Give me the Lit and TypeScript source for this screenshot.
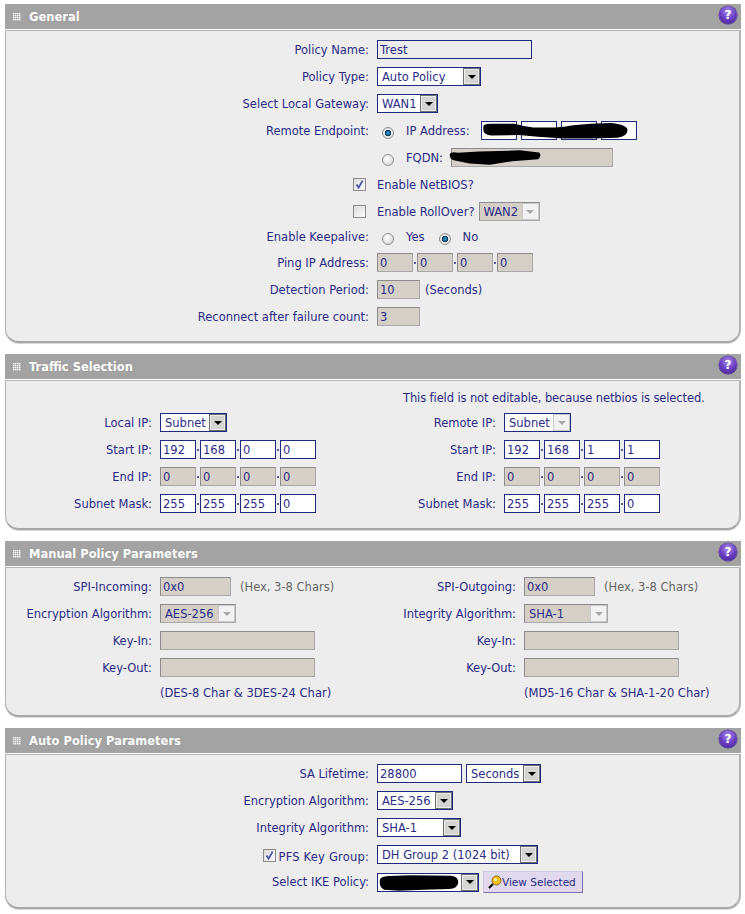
import { LitElement, html, css, svg } from "lit";
import { customElement } from "lit/decorators.js";

const field = (value: string, width: number, disabled = false, cls = "") =>
  html`<input class="field ${cls}" style="width:${width}px" .value=${value} value=${value} ?disabled=${disabled} />`;

const select = (value: string, width: number, mode: "" | "off" | "lock" = "", blob?: unknown) => html`
  <span class="sel ${mode}" style="width:${width}px">
    <select ?disabled=${mode !== ""}><option>${value}</option></select>
    <span class="arrow"><i></i></span>
    ${blob ?? ""}
  </span>`;

const octets = (vals: string[], disabled = false) => html`
  <span class="ip">
    ${vals.map((v, i) => html`${i ? html`<b class="dot"></b>` : ""}${field(v, 36, disabled)}`)}
  </span>`;

const radio = (on: boolean) => html`<span class="radio ${on ? "on" : ""}"></span>`;

const check = (on: boolean) => html`
  <span class="check">
    ${on
      ? html`<svg viewBox="0 0 11 11" width="11" height="11"><path d="M2.5 5.5 L4.6 8.6 L8.6 1.6" fill="none" stroke="#4a55a8" stroke-width="1.8"/></svg>`
      : ""}
  </span>`;

const grip = svg`<svg class="grip" viewBox="0 0 8 8" width="8" height="8">
  ${[0, 2, 4, 6].flatMap((y) => [0, 2, 4, 6].map((x) => svg`<rect x=${x} y=${y} width="1.4" height="1.4" fill="#fff"/>`))}
</svg>`;

const help = html`
  <span class="help"><span>?</span></span>`;

const blob = (d: string, cls: string) => svg`<svg class="blob ${cls}" viewBox="0 0 100 100" preserveAspectRatio="none"><path d=${d} fill="#000"/></svg>`;

const row = (label: unknown, control: unknown, cls = "") => html`
  <div class="row ${cls}"><div class="lab">${label}</div><div class="ctl">${control}</div></div>`;

@customElement("app-root")
export class AppRoot extends LitElement {
  static styles = css`
    :host {
      display: block;
      width: 745px;
      background: #fff;
      font: 11.5px "DejaVu Sans", Verdana, sans-serif;
      color: #2b2b86;
      padding: 4px 4px 5px 5px;
      box-sizing: border-box;
    }
    .panel { margin-bottom: 11px; width: 736px; }
    .panel:last-child { margin-bottom: 0; }
    .head {
      height: 25px;
      background: #a3a3a3;
      display: flex;
      align-items: center;
      color: #fff;
      font-weight: bold;
      font-size: 11.5px;
      padding: 0 4px 0 8px;
      text-shadow: 0 0 1px #8a8a8a;
    }
    .grip { margin-right: 8px; flex: none; }
    .title { flex: 1; }
    .help {
      width: 18px;
      height: 18px;
      margin-bottom: 3px;
      border-radius: 50%;
      background: radial-gradient(circle at 50% 30%, #a98ce8 0%, #6a3fc4 50%, #3d1c8c 100%);
      box-shadow: 0 0 0 0.5px #4a2a90;
      display: flex;
      align-items: center;
      justify-content: center;
      color: #fff;
      font: bold 12px "DejaVu Sans", sans-serif;
      text-shadow: none;
    }
    .body {
      margin-top: 1px;
      background: #ededed;
      border: 1px solid #b4b4b4;
      border-bottom: 2px solid #a8a8a8;
      border-right: 2px solid #b4b4b4;
      border-radius: 0 0 14px 14px;
      padding: 5px 0 11px;
      box-shadow: 0 1px 0 #d8d8d8;
    }
    .row { display: flex; align-items: center; height: 27px; }
    .row.short { height: 24px; }
    .row.tall { height: 28px; }
    .row.note { height: 23px; }
    .lab {
      flex: none;
      width: var(--lab);
      text-align: right;
      white-space: nowrap;
      display: flex;
      justify-content: flex-end;
      align-items: center;
    }
    .ctl {
      margin-left: 8px;
      display: flex;
      align-items: center;
      white-space: nowrap;
    }
    .wide { --lab: 363px; }
    .cols { display: grid; grid-template-columns: 366px 1fr; }
    .cols > div { --lab: 146px; }
    .cols > .traffic-r { --lab: 124px; }
    .cols > .manual-r { --lab: 144px; }
    .notice { padding-left: 31px; letter-spacing: -0.11px; }

    .field {
      box-sizing: border-box;
      height: 19px;
      border: 1px solid #1e2a80;
      background: #fff;
      color: #2b2b86;
      font: 11.5px "DejaVu Sans", Verdana, sans-serif;
      padding: 0 0 0 2px;
      margin: 0;
      outline: none;
      border-radius: 0;
    }
    .field.flat { background: #ededed; }
    .field:disabled {
      background: #d4d0c8;
      border-color: #8c8c8c #a8a8a8 #a8a8a8 #8c8c8c;
      color: #2b2b86;
      -webkit-text-fill-color: #2b2b86;
      opacity: 1;
    }
    .ip { display: inline-flex; align-items: center; position: relative; }
    .dot { width: 2px; height: 2px; margin: 0 1px; background: #5a5aa0; flex: none; }
    .sel { position: relative; display: inline-block; height: 19px; flex: none; }
    .sel select {
      appearance: none;
      -webkit-appearance: none;
      box-sizing: border-box;
      width: 100%;
      height: 19px;
      border: 1px solid #1e2a80;
      border-radius: 0;
      background: #fff;
      color: #2b2b86;
      font: 11.5px "DejaVu Sans", Verdana, sans-serif;
      padding: 0 0 0 4px;
      margin: 0;
      display: block;
      outline: none;
      opacity: 1;
    }
    .arrow {
      position: absolute;
      right: 1px;
      top: 1px;
      bottom: 1px;
      width: 17px;
      box-sizing: border-box;
      border: 1px solid #6e6e6e;
      box-shadow: inset 0 0 0 1px #ececec;
      background: #d4d4d0;
      display: flex;
      align-items: center;
      justify-content: center;
    }
    .arrow i {
      width: 0;
      height: 0;
      border: 4px solid transparent;
      border-top: 4px solid #000;
      border-bottom: 0;
    }
    .sel.off select {
      background: #d4d0c8;
      border-color: #8c8c8c #a8a8a8 #a8a8a8 #8c8c8c;
    }
    .sel.off .arrow, .sel.lock .arrow {
      background: #f2f2f2;
      border-color: #c8c8c8;
      box-shadow: none;
    }
    .sel.off .arrow i, .sel.lock .arrow i { border-top-color: #a8a8a8; }

    .radio {
      display: inline-block;
      box-sizing: border-box;
      width: 12px;
      height: 12px;
      border-radius: 50%;
      border: 1px solid #8e8e8e;
      background: radial-gradient(circle at 40% 35%, #fff 0%, #ddd 70%, #c0c0c0 100%);
      flex: none;
      position: relative;
      top: 2px;
      margin-left: 5px;
    }
    .radio.on {
      background: radial-gradient(circle, #4fb0e0 0%, #0d5a8c 30%, #12304a 42%, #e8e8e8 50%, #ddd 100%);
    }
    .rlabel { margin-left: 12px; }
    .rlabel + .radio { margin-left: 14px; }
    .check {
      display: inline-flex;
      box-sizing: border-box;
      width: 13px;
      height: 13px;
      border: 1px solid #8c8c8c;
      background: linear-gradient(135deg, #dcdcdc, #fafafa);
      flex: none;
    }
    .end-check { margin-right: 3px; display: inline-flex; }
    .pfs { display: inline-flex; align-items: center; gap: 3px; }
    .pfs .check { margin-top: 2px; }
    .pfs-text { padding-top: 4px; letter-spacing: 0.2px; }
    .after { margin-left: 4px; }
    .gap { margin-left: 5px; }
    .hint { color: #666; margin-left: 9px; }
    .fq { margin-left: 8px; position: relative; display: inline-flex; }
    .fq.ipf { margin-left: 11px; }
    .blob { position: absolute; overflow: visible; pointer-events: none; }
    .blob.ipb { left: 1px; top: 1px; width: 147px; height: 18px; }
    .blob.fqb { left: -2px; top: 1px; width: 93px; height: 17px; }
    .blob.ike { left: 2px; top: 2px; width: 80px; height: 16px; }
    .view {
      box-sizing: border-box;
      height: 22px;
      width: 100px;
      margin-left: 4px;
      padding: 0 0 0 4px;
      background: #e0d8ec;
      border: 1px solid #7a70b0;
      border-top-color: #d0c8e0;
      border-left-color: #d0c8e0;
      color: #2b2b86;
      font: 10.5px "DejaVu Sans", Verdana, sans-serif;
      display: inline-flex;
      align-items: center;
      white-space: nowrap;
    }
  `;

  private section(title: string, content: unknown) {
    return html`<section class="panel">
      <div class="head">${grip}<span class="title">${title}</span>${help}</div>
      <div class="body">${content}</div>
    </section>`;
  }

  render() {
    const ipBlob = blob(
      "M1 30 Q0 12 6 10 L22 10 Q28 25 35 30 L50 30 Q58 25 62 18 L74 10 L88 5 Q99 15 99 45 Q99 80 92 88 L74 92 L56 92 L38 82 L25 72 L6 75 Q0 70 1 30Z",
      "ipb"
    );
    const fqBlob = blob(
      "M1 30 Q2 15 10 22 L32 15 L76 8 L97 20 Q100 40 96 60 L68 72 L44 92 L22 85 L5 66 Q0 55 1 30Z",
      "fqb"
    );
    const ikeBlob = blob(
      "M1 35 Q1 8 12 6 L40 2 L90 4 Q100 10 99 50 Q98 85 88 88 L55 92 L25 98 L6 92 Q0 75 1 35Z",
      "ike"
    );

    return html`
      ${this.section(
        "General",
        html`<div class="wide">
          ${row("Policy Name:", field("Trest", 155, false, "flat"))}
          ${row("Policy Type:", select("Auto Policy", 104))}
          ${row("Select Local Gateway:", select("WAN1", 61))}
          ${row(
            "Remote Endpoint:",
            html`${radio(true)}<span class="rlabel">IP Address:</span>
              <span class="fq ipf">${octets(["", "", "", ""])}${ipBlob}</span>`
          )}
          ${row(
            "",
            html`${radio(false)}<span class="rlabel">FQDN:</span>
              <span class="fq">${field("", 162, true)}${fqBlob}</span>`
          )}
          ${row(html`<span class="end-check">${check(true)}</span>`, "Enable NetBIOS?")}
          ${row(
            html`<span class="end-check">${check(false)}</span>`,
            html`Enable RollOver?<span class="after"></span>${select("WAN2", 61, "off")}`
          )}
          ${row(
            "Enable Keepalive:",
            html`${radio(false)}<span class="rlabel">Yes</span>${radio(true)}<span class="rlabel">No</span>`,
            "short"
          )}
          ${row("Ping IP Address:", octets(["0", "0", "0", "0"], true))}
          ${row("Detection Period:", html`${field("10", 43, true)}<span class="gap">(Seconds)</span>`)}
          ${row("Reconnect after failure count:", field("3", 43, true))}
        </div>`
      )}
      ${this.section(
        "Traffic Selection",
        html`<div class="cols">
          <div>
            <div class="row note"></div>
            ${row("Local IP:", select("Subnet", 67))}
            ${row("Start IP:", octets(["192", "168", "0", "0"]))}
            ${row("End IP:", octets(["0", "0", "0", "0"], true))}
            ${row("Subnet Mask:", octets(["255", "255", "255", "0"]))}
          </div>
          <div class="traffic-r">
            <div class="row note notice">This field is not editable, because netbios is selected.</div>
            ${row("Remote IP:", select("Subnet", 67, "lock"))}
            ${row("Start IP:", octets(["192", "168", "1", "1"]))}
            ${row("End IP:", octets(["0", "0", "0", "0"], true))}
            ${row("Subnet Mask:", octets(["255", "255", "255", "0"]))}
          </div>
        </div>`
      )}
      ${this.section(
        "Manual Policy Parameters",
        html`<div class="cols">
          <div>
            ${row("SPI-Incoming:", html`${field("0x0", 71, true)}<span class="hint">(Hex, 3-8 Chars)</span>`)}
            ${row("Encryption Algorithm:", select("AES-256", 76, "off"))}
            ${row("Key-In:", field("", 155, true))}
            ${row("Key-Out:", field("", 155, true))}
            ${row("", "(DES-8 Char & 3DES-24 Char)", "note")}
          </div>
          <div class="manual-r">
            ${row("SPI-Outgoing:", html`${field("0x0", 71, true)}<span class="hint">(Hex, 3-8 Chars)</span>`)}
            ${row("Integrity Algorithm:", select("SHA-1", 84, "off"))}
            ${row("Key-In:", field("", 155, true))}
            ${row("Key-Out:", field("", 155, true))}
            ${row("", "(MD5-16 Char & SHA-1-20 Char)", "note")}
          </div>
        </div>`
      )}
      ${this.section(
        "Auto Policy Parameters",
        html`<div class="wide">
          ${row("SA Lifetime:", html`${field("28800", 85)}<span class="after"></span>${select("Seconds", 75)}`)}
          ${row("Encryption Algorithm:", select("AES-256", 76))}
          ${row("Integrity Algorithm:", select("SHA-1", 84))}
          ${row(html`<span class="pfs">${check(true)}<span class="pfs-text">PFS Key Group:</span></span>`, select("DH Group 2 (1024 bit)", 161))}
          ${row(
            "Select IKE Policy:",
            html`${select("", 102, "", ikeBlob)}
              <span class="view">
                <svg viewBox="0 0 14 14" width="14" height="14">
                  <path d="M5 9 L1 13" stroke="#000" stroke-width="2"/>
                  <circle cx="8.5" cy="5.5" r="4.5" fill="#f0c020" stroke="#8a6a10"/>
                  <circle cx="7.5" cy="4.5" r="1.5" fill="#fbeea0"/>
                </svg>View Selected
              </span>`,
            "tall"
          )}
        </div>`
      )}
    `;
  }
}
